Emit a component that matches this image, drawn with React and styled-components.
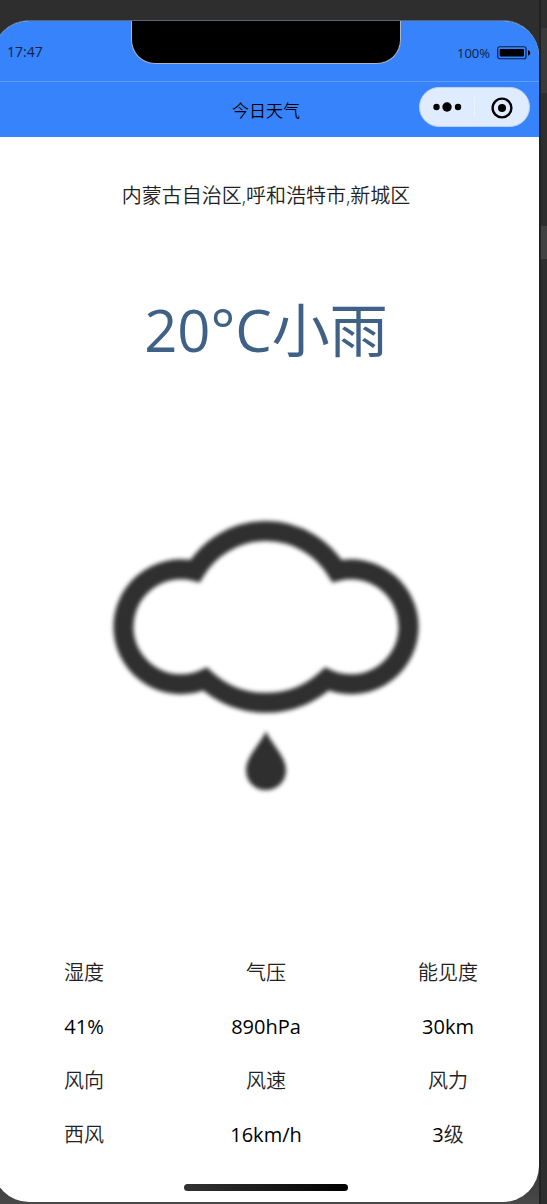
import React from "react";
import styled, { createGlobalStyle } from "styled-components";

const GlobalStyle = createGlobalStyle`
  *, *::before, *::after { box-sizing: border-box; }
  body {
    margin: 0;
    background: #2e2e2e;
    color: #000;
    font-family: "Open Sans", "Noto Sans CJK SC", sans-serif;
    font-weight: 400;
  }
`;

const Workspace = styled.div`
  display: flex;
  min-height: 100vh;
  overflow: hidden;
`;

const Stage = styled.div`
  flex: 1;
  padding: 20px 0 2px;
  background: linear-gradient(#2e2e2e 95%, #484848);
`;

const Gutter = styled.aside`
  display: flex;
  flex-direction: column;
  width: 8px;
  padding-top: 28px;
  gap: 133px;
  border-left: 2px solid #222;
  background: #2e2e2e;
`;

const GutterMark = styled.span`
  height: ${(p) => p.$height}px;
  background: ${(p) => p.$color};
`;

const Phone = styled.div`
  margin-left: -7px;
  border-radius: 36px;
  overflow: hidden;
  background: #fff;
  border-top: 1px solid #5d6470;
`;

const StatusBar = styled.div`
  display: grid;
  grid-template-columns: 1fr 270px 1fr;
  height: 61px;
  background: #3783fb;
  border-bottom: 1px solid #5f9cfc;
`;

const Time = styled.time`
  padding: 20px 0 0 14px;
  font-size: 14px;
  line-height: 22px;
  color: #0b1f42;
`;

const Notch = styled.div`
  height: 43px;
  background: #000;
  border: 1px solid #a9b4c6;
  border-top: 0;
  border-radius: 0 0 24px 24px;
`;

const Power = styled.div`
  display: flex;
  align-items: center;
  justify-content: flex-end;
  gap: 6px;
  height: 22px;
  margin: 21px 8px 0 0;
  font-size: 13px;
  color: #0b1f42;
`;

const NavBar = styled.header`
  display: grid;
  grid-template-columns: 1fr auto 1fr;
  align-items: center;
  height: 55px;
  padding: 0 9px 6px;
  background: #3783fb;
`;

const Title = styled.h1`
  grid-column: 2;
  margin: 0;
  padding-top: 8px;
  font-size: 17px;
  line-height: 24px;
  font-weight: 350;
`;

const Capsule = styled.div`
  display: flex;
  justify-self: end;
  align-items: center;
  width: 111px;
  height: 40px;
  border: 1px solid #bccfef;
  border-radius: 20px;
  background: #dfebff;
`;

const CapsuleButton = styled.button`
  display: grid;
  place-items: center;
  flex: 1;
  height: 20px;
  padding: 0;
  border: 0;
  background: none;

  & + & { border-left: 1px solid #edf3ff; }
`;

const Content = styled.main`
  display: flex;
  flex-direction: column;
  align-items: center;
  padding: 45px 0 11px;
`;

const Place = styled.p`
  margin: 0;
  font-size: 20px;
  line-height: 28px;
  font-weight: 350;
  color: #222;
`;

const Summary = styled.p`
  margin: 80px 0 0;
  font-size: 58px;
  line-height: 80px;
  color: #3f6186;
`;

const WeatherIcon = styled.svg`
  width: 340px;
  max-width: 100%;
  margin-top: 130px;
  filter: blur(2px);
`;

const Details = styled.dl`
  display: grid;
  grid-template-columns: repeat(3, 1fr);
  width: 100%;
  margin: 136px 0 0;
  text-align: center;
  font-size: 20px;
  line-height: 54px;
`;

const Label = styled.dt`
  font-weight: 350;
  color: #222;
`;

const Value = styled.dd`
  margin: 0;
`;

const Unit = styled.span`
  font-weight: 350;
  color: #222;
`;

const HomeIndicator = styled.div`
  width: 164px;
  height: 7px;
  margin-top: 22px;
  border-radius: 4px;
  background: linear-gradient(90deg, #333, #000);
`;

const details = [
  { label: "湿度", value: "41%" },
  { label: "气压", value: "890hPa" },
  { label: "能见度", value: "30km" },
  { label: "风向", unit: "西风" },
  { label: "风速", value: "16km/h" },
  { label: "风力", value: "3", unit: "级" },
];

function Battery() {
  return (
    <svg width="35" height="14" viewBox="0 0 35 14" aria-hidden="true">
      <rect x="1.7" y="0.75" width="28.3" height="12" rx="2" fill="none" stroke="#0b1f42" strokeWidth="1.2" />
      <rect x="3.7" y="3" width="24.3" height="7.6" rx="1" fill="#000" />
      <path d="M32 4.3c3 .4 3 4.8 0 5.2z" fill="#000" />
    </svg>
  );
}

function MoreIcon() {
  return (
    <svg width="30" height="12" viewBox="0 0 30 12" aria-hidden="true">
      <circle cx="4.5" cy="6" r="3.2" />
      <circle cx="15" cy="6" r="4.7" />
      <circle cx="26" cy="6" r="3.2" />
    </svg>
  );
}

function TargetIcon() {
  return (
    <svg width="22" height="22" viewBox="0 0 22 22" aria-hidden="true">
      <circle cx="11" cy="11" r="9.4" fill="none" stroke="#000" strokeWidth="2.4" />
      <circle cx="11" cy="11" r="4" />
    </svg>
  );
}

function LightRain() {
  return (
    <WeatherIcon viewBox="96 500 340 310" role="img" aria-label="小雨">
      <path
        d="M195 571A83 83 0 0 1 337 571A57.5 57.5 0 1 1 327 679A90 90 0 0 1 205 679A57.5 57.5 0 1 1 195 571Z"
        fill="none"
        stroke="#2f2f2f"
        strokeWidth="20"
      />
      <path
        d="M266 731C270 742 286 756 286 770C286 782 277 790 266 790C255 790 246 782 246 770C246 756 262 742 266 731Z"
        fill="#2f2f2f"
      />
    </WeatherIcon>
  );
}

export default function App() {
  return (
    <>
      <GlobalStyle />
      <Workspace lang="zh-CN">
        <Stage>
          <Phone>
            <StatusBar>
              <Time>17:47</Time>
              <Notch />
              <Power>
                100%
                <Battery />
              </Power>
            </StatusBar>
            <NavBar>
              <Title>今日天气</Title>
              <Capsule>
                <CapsuleButton type="button" aria-label="更多">
                  <MoreIcon />
                </CapsuleButton>
                <CapsuleButton type="button" aria-label="关闭">
                  <TargetIcon />
                </CapsuleButton>
              </Capsule>
            </NavBar>
            <Content>
              <Place>内蒙古自治区,呼和浩特市,新城区</Place>
              <Summary>20°C小雨</Summary>
              <LightRain />
              <Details>
                {details.map((item) => (
                  <div key={item.label}>
                    <Label>{item.label}</Label>
                    <Value>
                      {item.value}
                      {item.unit && <Unit>{item.unit}</Unit>}
                    </Value>
                  </div>
                ))}
              </Details>
              <HomeIndicator />
            </Content>
          </Phone>
        </Stage>
        <Gutter>
          <GutterMark $height={65} $color="#3a3a3a" />
          <GutterMark $height={33} $color="#424242" />
        </Gutter>
      </Workspace>
    </>
  );
}
